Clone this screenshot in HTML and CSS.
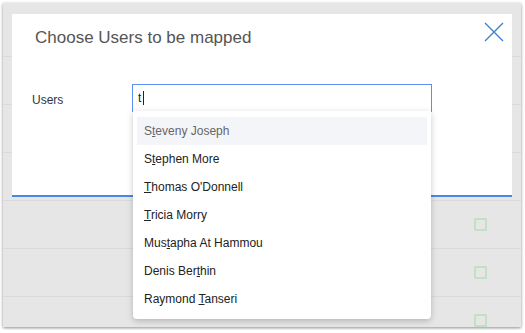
FILE: index.html
```html
<!DOCTYPE html>
<html>
<head>
    <meta name="viewport" content="width=device-width, initial-scale=1">
    <title>Choose Users to be mapped</title>
    <link rel="stylesheet" href="styles.css">
</head>
<body>
    <div class="window">
        <div class="table">
            <div class="table-row head"></div>
            <div class="table-row"><span class="check"></span></div>
            <div class="table-row"><span class="check"></span></div>
            <div class="table-row"><span class="check"></span></div>
            <div class="table-row"><span class="check"></span></div>
            <div class="table-row"><span class="check"></span></div>
            <div class="table-row"><span class="check"></span></div>
        </div>

        <div class="modal">
            <div class="modal-head">
                <h2 class="modal-title">Choose Users to be mapped</h2>
                <button class="modal-close" aria-label="Close">
                    <svg width="20" height="20" viewBox="0 0 20 20">
                        <path d="M1 1 L19 19 M19 1 L1 19" stroke="#3a80c8" stroke-width="1.3" fill="none"/>
                    </svg>
                </button>
            </div>
            <div class="field">
                <label class="field-label">Users</label>
                <div class="combo">
                    <div class="combo-input">t<span class="caret"></span></div>
                    <ul class="combo-menu">
                        <li class="combo-item active">S<u>t</u>eveny Joseph</li>
                        <li class="combo-item">S<u>t</u>ephen More</li>
                        <li class="combo-item"><u>T</u>homas O'Donnell</li>
                        <li class="combo-item"><u>T</u>ricia Morry</li>
                        <li class="combo-item">Mus<u>t</u>apha At Hammou</li>
                        <li class="combo-item">Denis Ber<u>t</u>hin</li>
                        <li class="combo-item">Raymond <u>T</u>anseri</li>
                    </ul>
                </div>
            </div>
        </div>
    </div>
</body>
</html>
```

FILE: styles.css
```css
body {
    margin: 0;
    background: #fff;
    font-family: "Liberation Sans", Arial, Helvetica, sans-serif;
    color: #222;
}

.window {
    position: relative;
    margin: 3px;
    width: 518px;
    height: 324px;
    background: #e6e6e6;
    box-shadow: 0 1px 3px rgba(0, 0, 0, 0.45);
    overflow: hidden;
}

.table-row {
    height: 47px;
    border-bottom: 1px solid #dadada;
    display: flex;
    align-items: center;
    justify-content: flex-end;
    padding-right: 34px;
}

    .table-row.head {
        height: 53px;
    }

.check {
    width: 9px;
    height: 9px;
    border: 2px solid #c3e0c3;
    border-radius: 1px;
}

/* modal over the table */
.modal {
    position: absolute;
    left: 9px;
    top: 11px;
    width: 500px;
    height: 181px;
    background: #fff;
    border-bottom: 2px solid #4a87e6;
}

.modal-head {
    padding: 14px 23px 0 23px;
}

.modal-title {
    margin: 0;
    font-size: 17px;
    line-height: 20px;
    font-weight: normal;
    color: #555;
}

.modal-close {
    position: absolute;
    top: 8px;
    right: 8px;
    width: 20px;
    height: 20px;
    padding: 0;
    border: none;
    background: none;
    cursor: pointer;
}

    .modal-close svg {
        display: block;
    }

.field {
    display: flex;
    align-items: center;
    margin-top: 36px;
    padding-left: 20px;
}

.field-label {
    width: 100px;
    padding-top: 3px;
    font-size: 12px;
    color: #333;
}

.combo {
    position: relative;
    width: 300px;
}

.combo-input {
    box-sizing: border-box;
    height: 28px;
    border: 1px solid #5b8ff3;
    background: #fff;
    padding-left: 5px;
    font-size: 12px;
    line-height: 26px;
    color: #222;
    display: flex;
    align-items: center;
}

.caret {
    display: inline-block;
    width: 1px;
    height: 14px;
    background: #222;
    margin-left: 2px;
}

.combo-menu {
    position: absolute;
    top: 27px;
    left: 1px;
    right: 1px;
    margin: 0;
    padding: 6px 4px 6px 4px;
    list-style: none;
    background: #fff;
    border-radius: 0 0 4px 4px;
    box-shadow: 0 2px 6px rgba(0, 0, 0, 0.22);
}

.combo-item {
    height: 28px;
    line-height: 28px;
    padding-left: 7px;
    font-size: 12px;
    color: #222;
}

    .combo-item.active {
        background: #f4f5f9;
        color: #666;
    }
```
